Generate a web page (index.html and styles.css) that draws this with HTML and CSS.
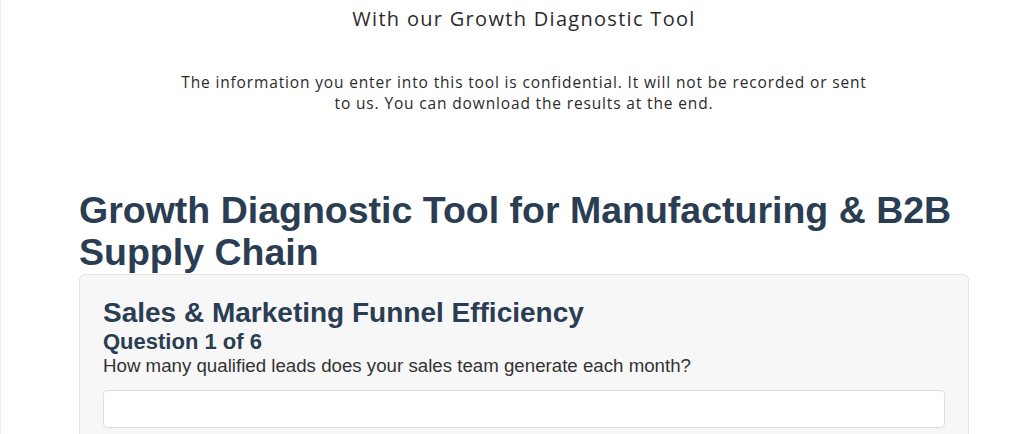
FILE: index.html
```html
<!DOCTYPE html>
<html lang="en">
<head>
  <meta charset="UTF-8" />
  <meta name="viewport" content="width=device-width, initial-scale=1" />
  <title>Growth Diagnostic Tool</title>
  <link rel="stylesheet" href="styles.css">
</head>
<body>
  <div class="page">
    <div class="intro">
      <h3>With our Growth Diagnostic Tool</h3>
      <p>The information you enter into this tool is confidential. It will not be recorded or sent to us. You can download the results at the end.</p>
    </div>

    <div class="container">
      <h1>Growth Diagnostic Tool for Manufacturing &amp; B2B Supply Chain</h1>

      <div class="card">
        <h2>Sales &amp; Marketing Funnel Efficiency</h2>
        <h4>Question 1 of 6</h4>
        <label for="answer">How many qualified leads does your sales team generate each month?</label>
        <input type="text" id="answer" />
      </div>
    </div>
  </div>
</body>
</html>
```

FILE: styles.css
```css
body {
  margin: 0;
  background-color: #fff;
  font-family: "Liberation Sans", Arial, sans-serif;
  color: #333;
}
.page {
  min-height: 100vh;
  padding-left: 23px;
  border-left: 1px solid #ececec;
}
.intro {
  max-width: 760px;
  margin: 0 auto;
  text-align: center;
  font-family: "Open Sans", "Liberation Sans", sans-serif;
  color: #2b2b2b;
}
.intro h3 {
  margin: 0;
  padding-top: 5px;
  font-size: 20px;
  font-weight: 400;
  line-height: 28px;
  letter-spacing: 1.3px;
}
.intro p {
  max-width: 696px;
  margin: 39px auto 0;
  font-size: 15.5px;
  line-height: 21px;
  letter-spacing: 0.85px;
}
.container {
  max-width: 890px;
  margin: 75px auto 0;
  padding-bottom: 40px;
}
h1 {
  margin: 0;
  font-size: 37.5px;
  line-height: 42px;
  font-weight: bold;
  color: #2a3d52;
}
.card {
  margin-top: 1px;
  background: #f7f7f7;
  border: 1px solid #e4e4e4;
  border-radius: 6px;
  padding: 22px 23px 24px;
}
.card h2 {
  margin: 0;
  font-size: 28px;
  line-height: 32px;
  color: #2a3d52;
}
.card h4 {
  margin: 0;
  font-size: 22px;
  line-height: 26px;
  color: #2a3d52;
}
.card label {
  display: block;
  font-size: 18.7px;
  line-height: 22px;
  color: #333;
}
.card input[type="text"] {
  display: block;
  box-sizing: border-box;
  width: 100%;
  height: 38px;
  margin-top: 13px;
  padding: 6px 12px;
  font-size: 16px;
  background: #fff;
  border: 1px solid #dedede;
  border-radius: 4px;
}
```
